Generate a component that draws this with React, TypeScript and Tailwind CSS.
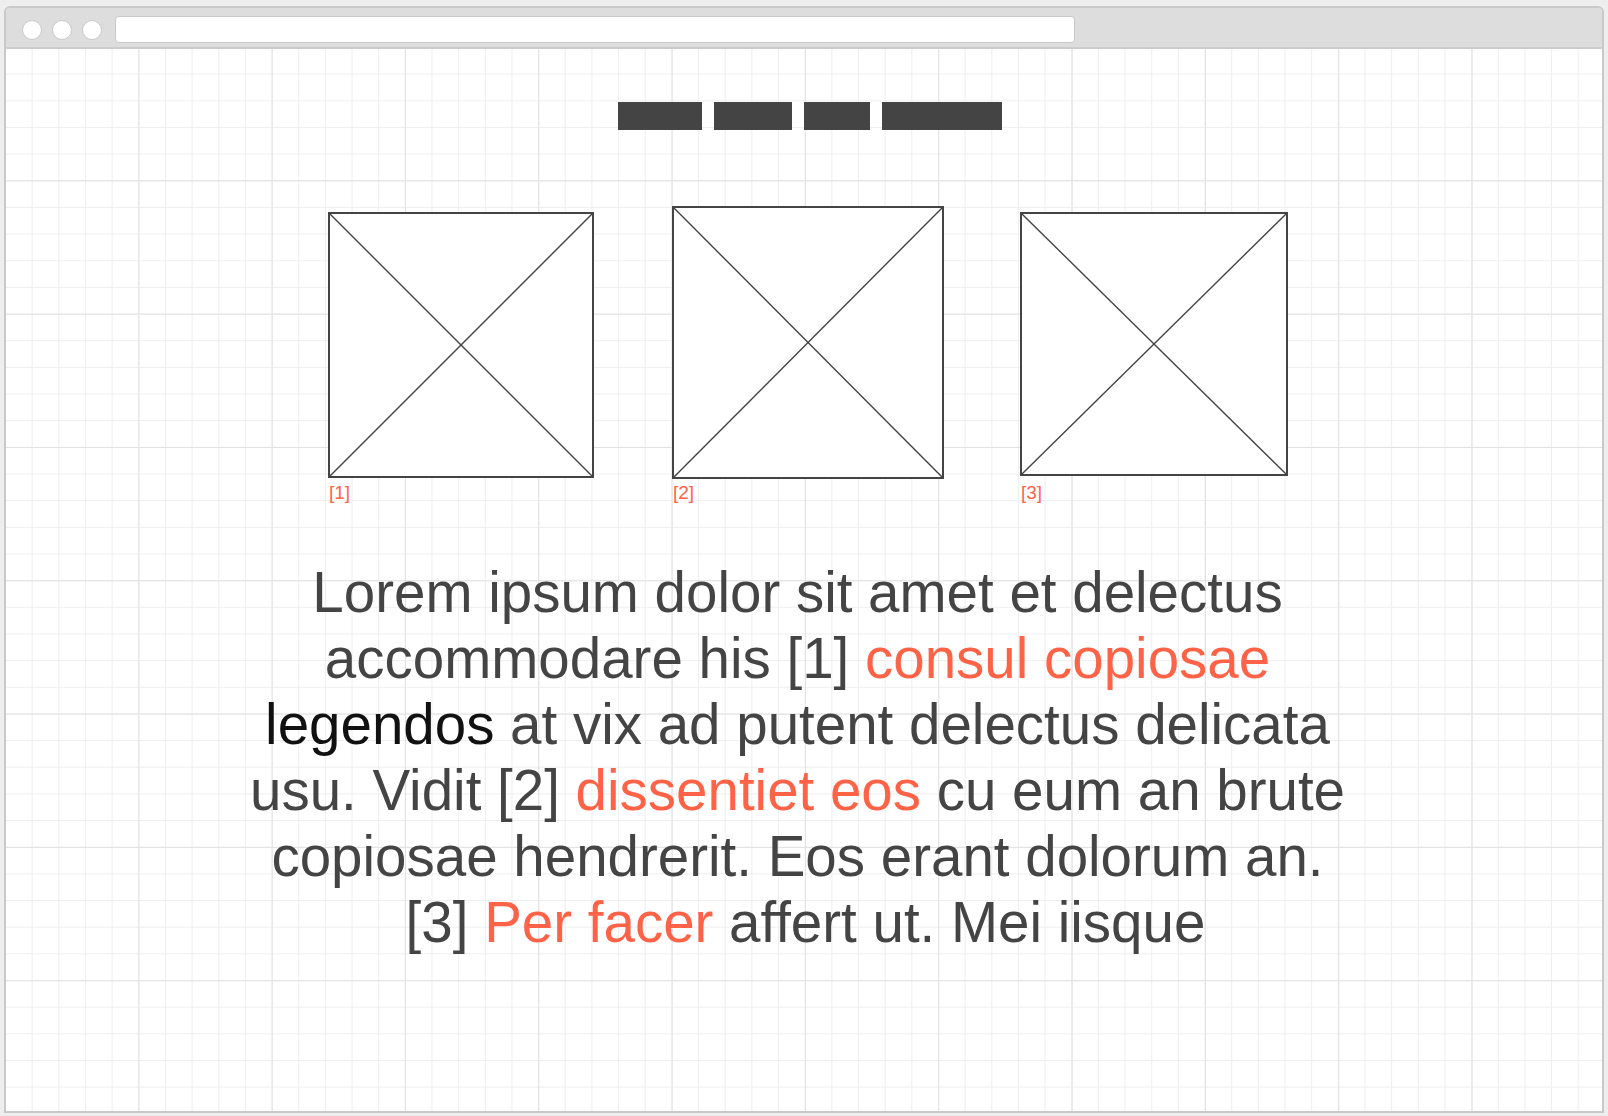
import React from "react";

const red = "text-[#ff6347]";

function Placeholder({ w, h, mt, labelMt, ml, label }: { w: number; h: number; mt: number; labelMt: number; ml: number; label: string }) {
  return (
    <div className="flex flex-col" style={{ marginLeft: ml, marginTop: mt }}>
      <div className="border-2 border-[#444444] bg-white" style={{ width: w, height: h }}>
        <svg className="block h-full w-full" viewBox="0 0 100 100" preserveAspectRatio="none">
          <line x1="0" y1="0" x2="100" y2="100" stroke="#444444" strokeWidth="1.4" vectorEffect="non-scaling-stroke" />
          <line x1="100" y1="0" x2="0" y2="100" stroke="#444444" strokeWidth="1.4" vectorEffect="non-scaling-stroke" />
        </svg>
      </div>
      <span className={`pl-[1px] text-[19px] leading-[20px] ${red}`} style={{ marginTop: labelMt }}>
        {label}
      </span>
    </div>
  );
}

export default function App() {
  return (
    <div className="h-[1116px] w-[1608px] bg-[#eeeeee] pt-[6px] pl-[4px] pr-[4px] pb-[3px] font-['Liberation_Sans',Arial,sans-serif]">
      <div className="flex h-full flex-col overflow-hidden rounded-t-[6px] border-2 border-[#c9c9c9] bg-white">
        {/* title bar */}
        <div className="flex h-[41px] shrink-0 items-start border-b-2 border-[#cccccc] bg-[#dddddd] pl-[16px]">
          <div className="mt-[12px] flex gap-[10px]">
            <span className="h-[20px] w-[20px] rounded-full border-[1.5px] border-[#c8c8c8] bg-white" />
            <span className="h-[20px] w-[20px] rounded-full border-[1.5px] border-[#c8c8c8] bg-white" />
            <span className="h-[20px] w-[20px] rounded-full border-[1.5px] border-[#c8c8c8] bg-white" />
          </div>
          <div className="ml-[13px] mt-[8px] h-[27px] w-[960px] rounded-[4px] border border-[#c8c8c8] bg-white" />
        </div>

        {/* canvas */}
        <div className="flex-1 [background-image:linear-gradient(to_right,#e2e2e2_1px,transparent_1px),linear-gradient(to_bottom,#e2e2e2_1px,transparent_1px),linear-gradient(to_right,#eeeeee_1px,transparent_1px),linear-gradient(to_bottom,#eeeeee_1px,transparent_1px)] [background-size:133.333px_133.333px,133.333px_133.333px,26.667px_26.667px,26.667px_26.667px] [background-position:-1px_-2px]">
          <div className="mt-[53px] flex justify-center gap-[12px] pl-[11px]">
            <div className="h-[28px] w-[84px] bg-[#444444]" />
            <div className="h-[28px] w-[78px] bg-[#444444]" />
            <div className="h-[28px] w-[66px] bg-[#444444]" />
            <div className="h-[28px] w-[120px] bg-[#444444]" />
          </div>

          <div className="mt-[76px] flex items-start pl-[322px]">
            <Placeholder w={266} h={266} mt={6} labelMt={5} ml={0} label="[1]" />
            <Placeholder w={272} h={273} mt={0} labelMt={4} ml={78} label="[2]" />
            <Placeholder w={268} h={264} mt={6} labelMt={7} ml={76} label="[3]" />
          </div>

          <div className="mt-[57px] flex justify-center pr-[13px]">
            <p className="w-[1116px] text-center text-[56.5px] leading-[66px] text-[#444444]">
              Lorem ipsum dolor sit amet et delectus accommodare his [1]{" "}
              <span className={red}>consul copiosae</span>{" "}
              <span className="text-[#111111]">legendos</span> at vix ad putent delectus delicata usu. Vidit [2]{" "}
              <span className={red}>dissentiet eos</span> cu eum an brute copiosae hendrerit. Eos erant dolorum an.{" "}
              <span className="pl-[16px]">[3]</span> <span className={red}>Per facer</span> affert ut. Mei iisque
            </p>
          </div>
        </div>
      </div>
    </div>
  );
}
